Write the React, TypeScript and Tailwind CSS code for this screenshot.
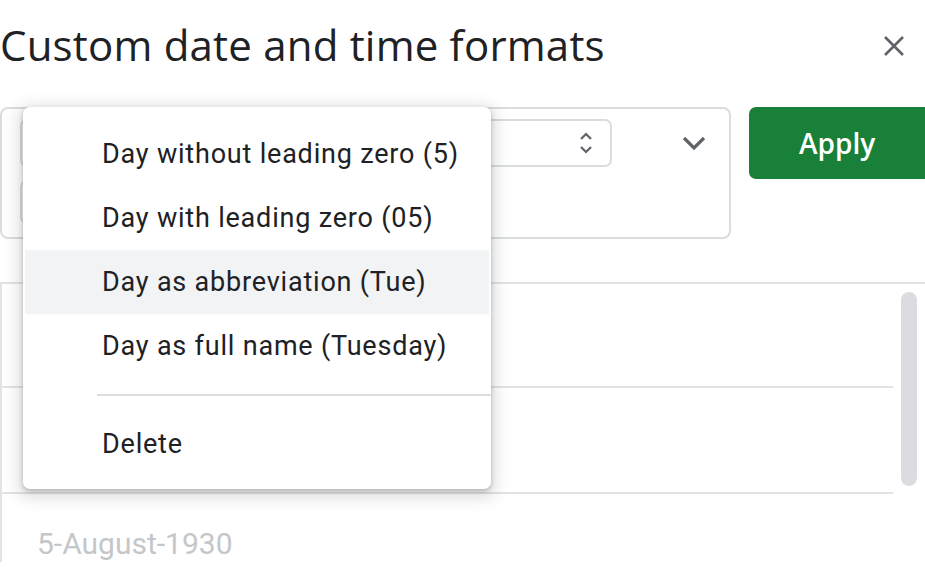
import React from 'react';

const menuItems = [
  'Day without leading zero (5)',
  'Day with leading zero (05)',
  'Day as abbreviation (Tue)',
  'Day as full name (Tuesday)',
];

export default function App() {
  return (
    <div className="relative h-[567px] w-[925px] overflow-hidden bg-white font-['Roboto',sans-serif] text-[#202124]">
      {/* header */}
      <div className="flex h-[107px] items-start justify-between">
        <h1 className="pt-[17px] font-['Open_Sans',sans-serif] text-[42px] leading-[56px] tracking-[0.2px] text-[#202124]">
          Custom date and time formats
        </h1>
        <button className="mr-[20px] mt-[35px] text-[#5f6368]">
          <svg width="22" height="22" viewBox="0 0 22 22" fill="none" stroke="currentColor" strokeWidth="2.6">
            <path d="M2 2 L20 20 M20 2 L2 20" />
          </svg>
        </button>
      </div>

      {/* format input row */}
      <div className="flex items-start gap-[18px]">
        <div className="relative h-[132px] w-[731px] shrink-0 rounded-[8px] border-2 border-[#dadce0] pl-[18px] pt-[10px]">
          <div className="flex h-[48px] w-[592px] items-center justify-end rounded-[7px] border-2 border-[#dadce0] pr-[17px]">
            <svg width="14" height="26" viewBox="0 0 14 26" fill="none" stroke="#5f6368" strokeWidth="2.2">
              <path d="M2 9 L7 4 L12 9" />
              <path d="M2 17 L7 22 L12 17" />
            </svg>
          </div>
          <div className="mt-[13px] h-[44px] w-[420px] rounded-[7px] border-2 border-[#dadce0]" />
          <svg className="absolute right-[23px] top-[26px]" width="24" height="16" viewBox="0 0 24 16" fill="none" stroke="#5f6368" strokeWidth="3.2">
            <path d="M2 3 L12 13 L22 3" />
          </svg>
        </div>
        <button className="flex h-[72px] w-[190px] shrink-0 items-center rounded-[7px] bg-[#188038] pl-[50px] font-['Open_Sans',sans-serif] text-[28px] font-semibold text-white">
          Apply
        </button>
      </div>

      {/* list */}
      <div className="relative mt-[43px] border-l-2 border-t-2 border-[#e3e3e3]">
        <div className="mr-[32px] h-[104px] border-b-2 border-[#e3e3e3]" />
        <div className="mr-[32px] h-[106px] border-b-2 border-[#e3e3e3]" />
        <div className="pl-[35px] pt-[32px] text-[30px] leading-[36px] text-[#c4c7ca]">5-August-1930</div>
        <div className="absolute right-[8px] top-[8px] h-[194px] w-[16px] rounded-full bg-[#dadce0]" />
      </div>

      {/* dropdown menu */}
      <div className="absolute left-[23px] top-[107px] w-[468px] rounded-[7px] bg-white pb-[13px] pt-[15px] shadow-[0_2px_4px_rgba(60,64,67,0.3),0_4px_14px_6px_rgba(60,64,67,0.15)]">
        {menuItems.map((item, i) => (
          <div
            key={item}
            className={`flex h-[64px] items-center text-[27px] tracking-[0.8px] ${i === 2 ? 'mx-[2px] bg-[#f1f3f4] pl-[77px]' : 'pl-[79px]'}`}
          >
            {item}
          </div>
        ))}
        <div className="my-[16px] ml-[74px] h-[2px] bg-[#dadce0]" />
        <div className="flex h-[64px] items-center pl-[79px] text-[27px] tracking-[0.8px]">Delete</div>
      </div>
    </div>
  );
}
